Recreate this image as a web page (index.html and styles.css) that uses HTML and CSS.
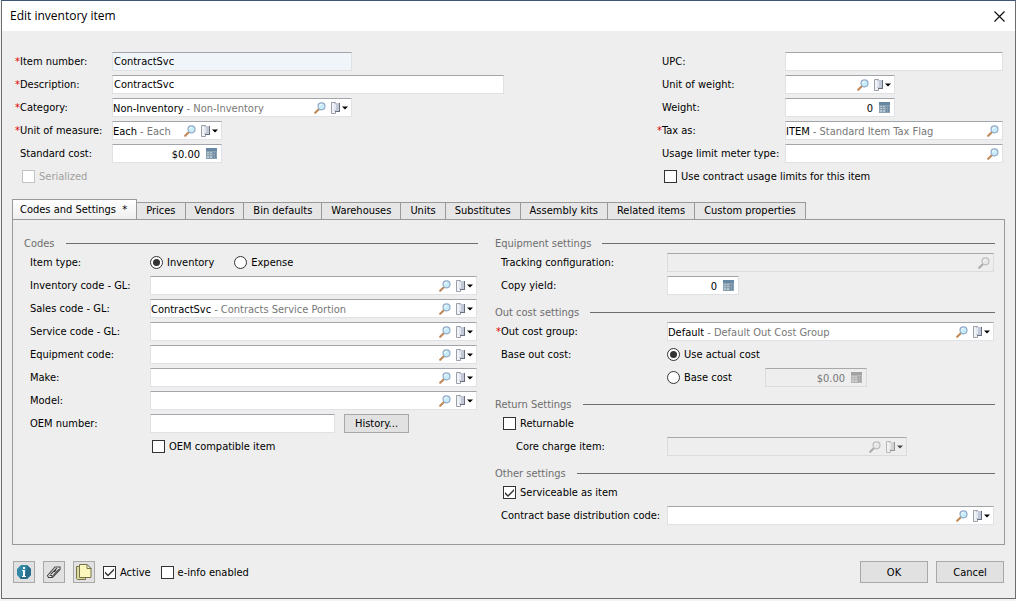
FILE: index.html
```html
<!DOCTYPE html>
<html lang="en">
<head>
    <meta charset="UTF-8">
    <meta name="viewport" content="width=device-width, initial-scale=1.0">
    <title>Edit inventory item</title>
    <link rel="stylesheet" href="styles.css">
</head>
<body>
    <!-- shared icons -->
    <svg class="defs" width="0" height="0" aria-hidden="true">
        <symbol id="i-find" viewBox="0 0 12 12">
            <path d="M1.200 10.800L4.800 7.200" stroke="#c08a5c" stroke-width="2.200" stroke-linecap="round"/>
            <circle cx="7.500" cy="4.300" r="3.500" fill="#c9ecfb" stroke="#93abc6" stroke-width="1.200"/>
            <path d="M5.600 4.200a2 2 0 0 1 2-2" fill="none" stroke="#fff"/>
        </symbol>
        <symbol id="i-open" viewBox="0 0 17 12">
            <path d="M.5 .5h4v11h-4z" fill="#f1f3f7" stroke="#9a9fa9"/>
            <path d="M3 1h5v8H3z" fill="#c3c8d6"/>
            <path d="M3 2h2v6H3z" fill="#e4e7ef"/>
            <path d="M8 1h1v9H8zM4 9h4v1H4z" fill="#6a6f80"/>
            <path d="M11 4.500h6l-3 3z" fill="#000"/>
        </symbol>
        <symbol id="i-calc" viewBox="0 0 11 11">
            <path d="M0 0h11v11H0z" fill="#8ba0b0"/>
            <path d="M0 0h11v3H0z" fill="#6788a5"/>
            <path d="M1 4h2v1H1zM4 4h2v1H4zM1 6h2v1H1zM4 6h2v1H4zM1 8h2v2H1zM4 8h2v2H4z" fill="#b4c6d1"/>
            <path d="M7 4h1v2H7zM7 7h1v3H7zM9 4h1v6H9z" fill="#6c8aa6"/>
        </symbol>
    </svg>

    <main class="dialog">
        <header class="titlebar">
            <h1>Edit inventory item</h1>
            <button class="close" type="button" aria-label="Close">
                <svg width="11" height="11" viewBox="0 0 11 11"><path d="M.5 .5l10 10M10.500 .5l-10 10" stroke="#111" stroke-width="1.200"/></svg>
            </button>
        </header>

        <form class="content">
            <div class="summary">
                <div class="rows rows-left">
                    <div class="row">
                        <label for="number"><span class="star">*</span>Item number:</label>
                        <div class="field w-medium tinted"><input id="number" type="text" value="ContractSvc"></div>
                    </div>
                    <div class="row">
                        <label for="desc"><span class="star">*</span>Description:</label>
                        <div class="field w-large"><input id="desc" type="text" value="ContractSvc"></div>
                    </div>
                    <div class="row">
                        <label for="category"><span class="star">*</span>Category:</label>
                        <div class="field combo w-medium">
                            <input id="category" type="text" size="12" value="Non-Inventory"><span class="hint">- Non-Inventory</span>
                            <button type="button" aria-label="Find category"><svg class="find"><use href="#i-find"/></svg></button>
                            <button type="button" aria-label="Open category"><svg class="open"><use href="#i-open"/></svg></button>
                        </div>
                    </div>
                    <div class="row">
                        <label for="uom"><span class="star">*</span>Unit of measure:</label>
                        <div class="field combo w-small">
                            <input id="uom" type="text" size="4" value="Each"><span class="hint">- Each</span>
                            <button type="button" aria-label="Find unit"><svg class="find"><use href="#i-find"/></svg></button>
                            <button type="button" aria-label="Open unit"><svg class="open"><use href="#i-open"/></svg></button>
                        </div>
                    </div>
                    <div class="row">
                        <label for="cost">Standard cost:</label>
                        <div class="field number w-small">
                            <input id="cost" type="text" value="$0.00">
                            <button type="button" aria-label="Calculator"><svg class="calc"><use href="#i-calc"/></svg></button>
                        </div>
                    </div>
                    <div class="row">
                        <label class="check indent"><input type="checkbox" disabled>Serialized</label>
                    </div>
                </div>

                <div class="rows rows-right">
                    <div class="row">
                        <label for="upc">UPC:</label>
                        <div class="field"><input id="upc" type="text"></div>
                    </div>
                    <div class="row">
                        <label for="uow">Unit of weight:</label>
                        <div class="field combo w-small">
                            <input id="uow" type="text" size="1"><span class="hint"></span>
                            <button type="button" aria-label="Find unit"><svg class="find"><use href="#i-find"/></svg></button>
                            <button type="button" aria-label="Open unit"><svg class="open"><use href="#i-open"/></svg></button>
                        </div>
                    </div>
                    <div class="row">
                        <label for="weight">Weight:</label>
                        <div class="field number w-small">
                            <input id="weight" type="text" value="0">
                            <button type="button" aria-label="Calculator"><svg class="calc"><use href="#i-calc"/></svg></button>
                        </div>
                    </div>
                    <div class="row">
                        <label for="tax"><span class="star">*</span>Tax as:</label>
                        <div class="field combo">
                            <input id="tax" type="text" size="4" value="ITEM"><span class="hint">- Standard Item Tax Flag</span>
                            <button type="button" aria-label="Find tax flag"><svg class="find"><use href="#i-find"/></svg></button>
                        </div>
                    </div>
                    <div class="row">
                        <label for="meter">Usage limit meter type:</label>
                        <div class="field combo">
                            <input id="meter" type="text" size="1"><span class="hint"></span>
                            <button type="button" aria-label="Find meter type"><svg class="find"><use href="#i-find"/></svg></button>
                        </div>
                    </div>
                    <div class="row">
                        <label class="check indent"><input type="checkbox">Use contract usage limits for this item</label>
                    </div>
                </div>
            </div>

            <div class="tabs" role="tablist">
                <button type="button" role="tab" class="active" aria-selected="true">Codes and Settings &nbsp;*</button>
                <button type="button" role="tab">Prices</button>
                <button type="button" role="tab">Vendors</button>
                <button type="button" role="tab">Bin defaults</button>
                <button type="button" role="tab">Warehouses</button>
                <button type="button" role="tab">Units</button>
                <button type="button" role="tab">Substitutes</button>
                <button type="button" role="tab">Assembly kits</button>
                <button type="button" role="tab">Related items</button>
                <button type="button" role="tab">Custom properties</button>
            </div>

            <div class="panel" role="tabpanel">
                <section class="codes">
                    <h2>Codes</h2>
                    <div class="row">
                        <span class="label">Item type:</span>
                        <div class="radios">
                            <label class="check"><input type="radio" name="type" checked>Inventory</label>
                            <label class="check"><input type="radio" name="type">Expense</label>
                        </div>
                    </div>
                    <div class="row">
                        <label for="inv-gl">Inventory code - GL:</label>
                        <div class="field combo">
                            <input id="inv-gl" type="text" size="1"><span class="hint"></span>
                            <button type="button" aria-label="Find"><svg class="find"><use href="#i-find"/></svg></button>
                            <button type="button" aria-label="Open"><svg class="open"><use href="#i-open"/></svg></button>
                        </div>
                    </div>
                    <div class="row">
                        <label for="sales-gl">Sales code - GL:</label>
                        <div class="field combo">
                            <input id="sales-gl" type="text" size="10" value="ContractSvc"><span class="hint">- Contracts Service Portion</span>
                            <button type="button" aria-label="Find"><svg class="find"><use href="#i-find"/></svg></button>
                            <button type="button" aria-label="Open"><svg class="open"><use href="#i-open"/></svg></button>
                        </div>
                    </div>
                    <div class="row">
                        <label for="service-gl">Service code - GL:</label>
                        <div class="field combo">
                            <input id="service-gl" type="text" size="1"><span class="hint"></span>
                            <button type="button" aria-label="Find"><svg class="find"><use href="#i-find"/></svg></button>
                            <button type="button" aria-label="Open"><svg class="open"><use href="#i-open"/></svg></button>
                        </div>
                    </div>
                    <div class="row">
                        <label for="equipment">Equipment code:</label>
                        <div class="field combo">
                            <input id="equipment" type="text" size="1"><span class="hint"></span>
                            <button type="button" aria-label="Find"><svg class="find"><use href="#i-find"/></svg></button>
                            <button type="button" aria-label="Open"><svg class="open"><use href="#i-open"/></svg></button>
                        </div>
                    </div>
                    <div class="row">
                        <label for="make">Make:</label>
                        <div class="field combo">
                            <input id="make" type="text" size="1"><span class="hint"></span>
                            <button type="button" aria-label="Find"><svg class="find"><use href="#i-find"/></svg></button>
                            <button type="button" aria-label="Open"><svg class="open"><use href="#i-open"/></svg></button>
                        </div>
                    </div>
                    <div class="row">
                        <label for="model">Model:</label>
                        <div class="field combo">
                            <input id="model" type="text" size="1"><span class="hint"></span>
                            <button type="button" aria-label="Find"><svg class="find"><use href="#i-find"/></svg></button>
                            <button type="button" aria-label="Open"><svg class="open"><use href="#i-open"/></svg></button>
                        </div>
                    </div>
                    <div class="row">
                        <label for="oem">OEM number:</label>
                        <div class="oem">
                            <div class="field"><input id="oem" type="text"></div>
                            <button type="button" class="btn">History...</button>
                        </div>
                    </div>
                    <div class="row">
                        <span></span>
                        <label class="check inset"><input type="checkbox">OEM compatible item</label>
                    </div>
                </section>

                <section class="settings">
                    <h2>Equipment settings</h2>
                    <div class="row">
                        <label for="tracking">Tracking configuration:</label>
                        <div class="field combo disabled">
                            <input id="tracking" type="text" size="1" disabled><span class="hint"></span>
                            <button type="button" disabled aria-label="Find"><svg class="find"><use href="#i-find"/></svg></button>
                        </div>
                    </div>
                    <div class="row">
                        <label for="yield">Copy yield:</label>
                        <div class="field number w-yield">
                            <input id="yield" type="text" value="0">
                            <button type="button" aria-label="Calculator"><svg class="calc"><use href="#i-calc"/></svg></button>
                        </div>
                    </div>

                    <h2>Out cost settings</h2>
                    <div class="row">
                        <label for="group"><span class="star">*</span>Out cost group:</label>
                        <div class="field combo">
                            <input id="group" type="text" size="6" value="Default"><span class="hint">- Default Out Cost Group</span>
                            <button type="button" aria-label="Find"><svg class="find"><use href="#i-find"/></svg></button>
                            <button type="button" aria-label="Open"><svg class="open"><use href="#i-open"/></svg></button>
                        </div>
                    </div>
                    <div class="row">
                        <span class="label">Base out cost:</span>
                        <label class="check"><input type="radio" name="base" checked>Use actual cost</label>
                    </div>
                    <div class="row">
                        <span></span>
                        <div class="base-cost">
                            <label class="check"><input type="radio" name="base">Base cost</label>
                            <div class="field number disabled">
                                <input type="text" value="$0.00" aria-label="Base cost amount" disabled>
                                <button type="button" disabled aria-label="Calculator"><svg class="calc"><use href="#i-calc"/></svg></button>
                            </div>
                        </div>
                    </div>

                    <h2>Return Settings</h2>
                    <div class="row">
                        <label class="check indent"><input type="checkbox">Returnable</label>
                    </div>
                    <div class="row">
                        <label class="nested" for="core">Core charge item:</label>
                        <div class="field combo w-medium disabled">
                            <input id="core" type="text" size="1" disabled><span class="hint"></span>
                            <button type="button" disabled aria-label="Find"><svg class="find"><use href="#i-find"/></svg></button>
                            <button type="button" disabled aria-label="Open"><svg class="open"><use href="#i-open"/></svg></button>
                        </div>
                    </div>

                    <h2>Other settings</h2>
                    <div class="row">
                        <label class="check indent"><input type="checkbox" checked>Serviceable as item</label>
                    </div>
                    <div class="row">
                        <label for="dist">Contract base distribution code:</label>
                        <div class="field combo">
                            <input id="dist" type="text" size="1"><span class="hint"></span>
                            <button type="button" aria-label="Find"><svg class="find"><use href="#i-find"/></svg></button>
                            <button type="button" aria-label="Open"><svg class="open"><use href="#i-open"/></svg></button>
                        </div>
                    </div>
                </section>
            </div>

            <footer class="actions">
                <button type="button" class="btn tool" aria-label="Information">
                    <svg width="16" height="16" viewBox="0 0 16 16">
                        <path d="M5 1h6l4 4v6l-4 4H5l-4-4V5z" fill="#3388a8"/>
                        <path d="M11 1l4 4v6l-4 4H5l-2-2c6 0 8-5 8-12z" fill="#2a6c88"/>
                        <path d="M7 3h2v2H7zM6 6h3v6h1v1H6v-1h1V7H6z" fill="#fff"/>
                    </svg>
                </button>
                <button type="button" class="btn tool" aria-label="Attachments">
                    <svg width="16" height="16" viewBox="0 0 16 16" fill="none" stroke="#444">
                        <path d="M1.500 11.500L9 3h5v2.500L6.500 13.500h-4z" fill="#f4f4f4" stroke-width="1.100"/>
                        <path d="M3.500 11.500h2.500v2M4.500 10.500L11 4M7 11.500L13 5M8 8l2-2" stroke-width="1.100"/>
                    </svg>
                </button>
                <button type="button" class="btn tool" aria-label="Notes">
                    <svg width="16" height="16" viewBox="0 0 16 16" stroke="#77744c">
                        <path d="M.5 2.500h9v13h-8l-1-1z" fill="#ddd99a"/>
                        <path d="M3.500 .5h7.500l4 4v9h-11.500z" fill="#fbf7bd"/>
                        <path d="M11 .5v4h4z" fill="#fffef0"/>
                    </svg>
                </button>
                <label class="check"><input type="checkbox" checked>Active</label>
                <label class="check"><input type="checkbox">e-info enabled</label>
                <span class="spacer"></span>
                <button type="submit" class="btn wide">OK</button>
                <button type="button" class="btn wide">Cancel</button>
            </footer>
        </form>
    </main>
</body>
</html>
```
FILE: styles.css
```css
* {
    box-sizing: border-box;
}
body {
    margin: 0;
    padding: 0 0 2px 1px;
    background-color: #f4f4f4;
    color: #000;
    font: 11px/15px "DejaVu Sans Condensed", "DejaVu Sans", sans-serif;
}
button, input {
    font: inherit;
    color: inherit;
}
.defs {
    display: block;
    position: absolute;
}
.dialog {
    display: flex;
    flex-direction: column;
    min-height: calc(100vh - 2px);
    border: 1px solid #6a6c70;
    border-top-color: #3f5578;
    background-color: #eee;
}

/* title bar */
.titlebar {
    display: flex;
    align-items: center;
    justify-content: space-between;
    height: 30px;
    padding: 0 10px 0 8px;
    background-color: #fff;
}
.titlebar h1 {
    margin: 0;
    font: 12px/16px "Open Sans", "Noto Sans", sans-serif;
}
.close {
    display: flex;
    padding: 0;
    border: 0;
    background: none;
}

.content {
    display: flex;
    flex: 1;
    flex-direction: column;
    padding: 19px 10px 0;
}

/* rows */
.row {
    display: grid;
    grid-template-columns: var(--label) 1fr;
    align-items: center;
    height: 23px;
    white-space: nowrap;
}
.row > label, .label {
    padding-left: 6px;
}
.star {
    display: inline-block;
    width: 5px;
    margin-left: -5px;
    color: #e00000;
}
.summary {
    display: grid;
    grid-template-columns: 1fr 347px;
    padding: 0 2px;
}
.rows-left {
    --label: 98px;
}
.rows-right {
    --label: 129px;
}

/* fields */
.field {
    display: flex;
    align-items: center;
    width: 100%;
    height: 19px;
    border: 1px solid #e0e1e4;
    border-top-color: #a3a5aa;
    background-color: #fff;
}
.field input {
    flex: 1;
    width: 100%;
    min-width: 0;
    height: 17px;
    padding: 0 1px;
    border: 0;
    outline: 0;
    background: none;
}
.field button {
    display: flex;
    flex: none;
    padding: 0;
    border: 0;
    background: none;
}
.w-small {
    width: 110px;
}
.w-medium {
    width: 240px;
}
.w-large {
    width: 392px;
}
.w-yield {
    width: 72px;
}
.tinted {
    background-color: #f0f5fa;
}
.combo {
    padding-right: 3px;
}
.combo input {
    flex: none;
    width: auto;
    field-sizing: content;
    padding: 2px 0 0;
}
.hint {
    flex: 1;
    padding: 2px 0 0 3px;
    color: #777;
}
.number {
    padding-right: 4px;
    gap: 5px;
}
.number input {
    padding-top: 2px;
    text-align: right;
}
.find {
    width: 12px;
    height: 12px;
}
.combo button + button {
    margin-left: 5px;
}
.open {
    width: 17px;
    height: 12px;
}
.calc {
    width: 11px;
    height: 11px;
}
.disabled {
    border-color: #dcdcdc;
    border-top-color: #a8a8a8;
    background-color: #eee;
    color: #777;
}
.disabled svg {
    filter: grayscale(1);
    opacity: 0.7;
}

/* check boxes and radios */
.check {
    display: flex;
    align-items: center;
    gap: 4px;
}
.row > .check {
    padding-left: 0;
}
.row > .indent {
    grid-column: 1 / -1;
    padding-left: 8px;
}
.row > .inset {
    padding-left: 2px;
}
.check input {
    display: grid;
    place-content: center;
    appearance: none;
    width: 13px;
    height: 13px;
    margin: 0;
    border: 1px solid #333;
    background-color: #fff;
}
.check input[type="checkbox"]:checked::before {
    content: "";
    width: 11px;
    height: 11px;
    background-color: #333;
    clip-path: polygon(1px 5px, 4px 8px, 10px 2px, 10px 4px, 4px 10px, 1px 7px);
}
.check input[type="radio"] {
    border-radius: 50%;
}
.check input[type="radio"]:checked::before {
    content: "";
    width: 7px;
    height: 7px;
    border-radius: 50%;
    background-color: #333;
}
.check:has(input:disabled) {
    color: #a0a0a0;
}
.check input:disabled {
    border-color: #c4c4c4;
}

/* tabs */
.tabs {
    display: flex;
    align-items: flex-end;
    margin-top: 11px;
}
.tabs button {
    height: 18px;
    margin-bottom: -1px;
    padding: 0 9px;
    border: 1px solid #999;
    border-left-width: 0;
    background-color: #e6e6e6;
    line-height: 16px;
    white-space: nowrap;
}
.tabs .active {
    height: 21px;
    padding: 0 9px 0 7px;
    border-left-width: 1px;
    border-bottom: 0;
    background: linear-gradient(#fff, #eee);
}
.panel {
    display: grid;
    flex: 1;
    grid-template-columns: 454fr 500fr;
    gap: 17px;
    padding: 8px 9px 16px 11px;
    border: 1px solid #999;
}
.codes {
    --label: 126px;
}
.settings {
    --label: 172px;
}
.panel section {
    min-width: 0;
}
.panel .row {
    padding-right: 1px;
}
.panel h2 {
    display: flex;
    align-items: center;
    gap: 11px;
    height: 23px;
    margin: 0;
    padding-top: 8px;
    color: #6d6d6d;
    font: inherit;
}
.panel h2::after {
    content: "";
    flex: 1;
    height: 1px;
    background-color: #6d6d6d;
}
.radios {
    display: flex;
    gap: 20px;
}
.oem {
    display: grid;
    grid-template-columns: 1fr 65px;
    gap: 9px;
    padding-right: 68px;
}
.row > .nested {
    padding-left: 21px;
}
.base-cost {
    display: grid;
    grid-template-columns: 98px 102px;
    align-items: center;
}

/* buttons */
.btn {
    height: 19px;
    padding: 0 7px;
    border: 1px solid #a8a8a8;
    background-color: #e1e1e1;
}
.actions {
    display: flex;
    align-items: center;
    gap: 8px;
    padding: 16px 1px 15px;
}
.actions .tool {
    display: grid;
    place-content: center;
    width: 22px;
    height: 22px;
    padding: 0;
}
.actions .check + .check {
    margin-left: 2px;
}
.spacer {
    flex: 1;
}
.actions .wide {
    width: 68px;
    height: 22px;
}
```
